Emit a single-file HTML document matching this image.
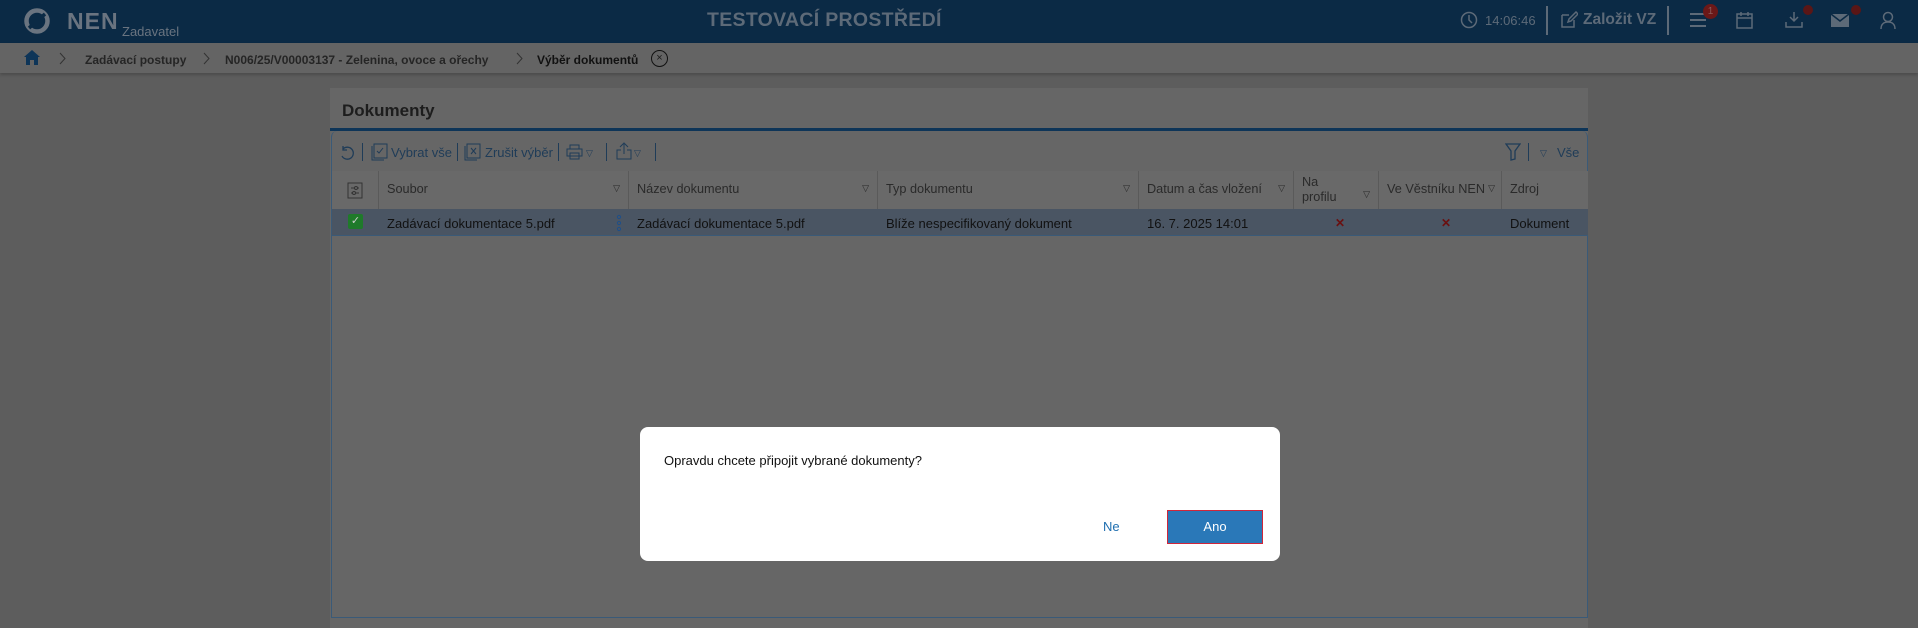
<!DOCTYPE html>
<html><head><meta charset="utf-8"><style>
*{box-sizing:border-box;margin:0;padding:0}
body{width:1918px;height:618px;overflow:hidden;background:#5d5d5d;font-family:"Liberation Sans",sans-serif;font-size:13px;color:#1c1c1c;position:relative}
.abs{position:absolute}
.hdr{left:0;top:0;width:1918px;height:43px;background:#0b2a45}
.bc{left:0;top:43px;width:1918px;height:30px;background:#646464;box-shadow:0 2px 3px rgba(0,0,0,.2)}
.panel{left:330px;top:88px;width:1258px;height:540px;background:#666}
.th{top:171px;height:38px;background:#696969;border-right:1px solid #5a5a5a;color:#2a2a2a;font-size:12.7px;padding:11px 8px}
.tri{position:absolute;right:8px;top:12px;font-size:9px;color:#2a2a2a}
.td{top:210px;height:25px;padding:6px 8px;font-size:13px;color:#111}
.bct{top:53px;font-size:12px;font-weight:bold;color:#252525}
.tb{top:145px;font-size:13px;color:#1f3c58}
.sep{top:143px;width:1px;height:18px;background:#1f3c58}
</style></head><body>
<div class="abs hdr"></div>
<svg class="abs" style="left:24px;top:8px" width="26" height="26" viewBox="0 0 26 26"><circle cx="13" cy="13" r="10.5" stroke="#6a7480" stroke-width="4.5" fill="none"/><path d="M5 20 L21 6" stroke="#0b2a45" stroke-width="3.5"/></svg>
<div class="abs" style="left:67px;top:8px;font-size:23px;font-weight:bold;color:#6a7480;letter-spacing:1px">NEN</div>
<div class="abs" style="left:122px;top:24px;font-size:13px;color:#6a7480">Zadavatel</div>
<div class="abs" style="left:707px;top:9px;font-size:19.5px;font-weight:bold;color:#5d6a78;letter-spacing:.3px">TESTOVACÍ PROSTŘEDÍ</div>
<svg class="abs" style="left:1460px;top:11px" width="18" height="18"><circle cx="9" cy="9" r="7.5" stroke="#5d6a78" stroke-width="1.5" fill="none"/><path d="M9 4v5l3 3" stroke="#5d6a78" stroke-width="1.5" fill="none"/></svg>
<div class="abs" style="left:1485px;top:13px;font-size:13px;color:#5d6a78">14:06:46</div>
<div class="abs" style="left:1546px;top:6px;width:2px;height:29px;background:#5d6a78"></div>
<svg class="abs" style="left:1560px;top:11px" width="18" height="18"><path d="M2 4h7M2 4v12h12V9M8 11l1-3 7-7 2 2-7 7z" stroke="#5d6a78" stroke-width="1.5" fill="none"/></svg>
<div class="abs" style="left:1583px;top:11px;font-size:15.5px;font-weight:bold;color:#5d6a78">Založit VZ</div>
<div class="abs" style="left:1667px;top:6px;width:2px;height:29px;background:#5d6a78"></div>
<svg class="abs" style="left:1689px;top:12px" width="18" height="16"><path d="M1 2h16M1 8h16M1 14h16" stroke="#5d6a78" stroke-width="2"/></svg>
<div class="abs" style="left:1703px;top:4px;width:15px;height:15px;border-radius:50%;background:#6b1818;color:#8a5a5a;font-size:10px;text-align:center;line-height:15px">1</div>
<svg class="abs" style="left:1736px;top:11px" width="17" height="18"><rect x="1" y="3" width="15" height="14" stroke="#5d6a78" stroke-width="1.5" fill="none"/><path d="M1 7h15M5 1v4M12 1v4" stroke="#5d6a78" stroke-width="1.5"/></svg>
<svg class="abs" style="left:1785px;top:11px" width="18" height="18"><path d="M9 1v9M5 6l4 4 4-4M1 11v5h16v-5" stroke="#5d6a78" stroke-width="1.5" fill="none"/></svg>
<div class="abs" style="left:1803px;top:5px;width:10px;height:10px;border-radius:50%;background:#5a1616"></div>
<svg class="abs" style="left:1831px;top:14px" width="18" height="13"><rect width="18" height="13" fill="#5d6a78"/><path d="M0 0l9 7 9-7" stroke="#0b2a45" stroke-width="1.5" fill="none"/></svg>
<div class="abs" style="left:1851px;top:5px;width:10px;height:10px;border-radius:50%;background:#5a1616"></div>
<svg class="abs" style="left:1880px;top:11px" width="16" height="18"><circle cx="8" cy="6" r="4.5" stroke="#5d6a78" stroke-width="1.5" fill="none"/><path d="M1 18c0-5 3-7 7-7s7 2 7 7" stroke="#5d6a78" stroke-width="1.5" fill="none"/></svg>

<div class="abs bc"></div>
<svg class="abs" style="left:23px;top:49px" width="18" height="17"><path d="M9 1L1 8h2v8h4v-5h4v5h4V8h2z" fill="#0e3558"/></svg>
<svg class="abs" style="left:59px;top:52px" width="8" height="13"><path d="M1 1l5 5.5L1 12" stroke="#333" fill="none"/></svg>
<div class="abs bct" style="left:85px">Zadávací postupy</div>
<svg class="abs" style="left:203px;top:52px" width="8" height="13"><path d="M1 1l5 5.5L1 12" stroke="#333" fill="none"/></svg>
<div class="abs bct" style="left:225px">N006/25/V00003137 - Zelenina, ovoce a ořechy</div>
<svg class="abs" style="left:516px;top:52px" width="8" height="13"><path d="M1 1l5 5.5L1 12" stroke="#333" fill="none"/></svg>
<div class="abs bct" style="left:537px;color:#111">Výběr dokumentů</div>
<div class="abs" style="left:651px;top:50px;width:17px;height:17px;border:1.5px solid #111;border-radius:50%;font-size:11px;text-align:center;line-height:14px">×</div>

<div class="abs panel"></div>
<div class="abs" style="left:342px;top:101px;font-size:17px;font-weight:bold;color:#1d1d1d">Dokumenty</div>
<div class="abs" style="left:330px;top:128px;width:1258px;height:3px;background:#0e3558"></div>
<div class="abs" style="left:331px;top:131px;width:1257px;height:487px;border:1px solid #3a5a78;border-top:none;border-radius:6px 6px 0 0"></div>
<svg class="abs" style="left:339px;top:145px" width="16" height="16"><path d="M4 4a6 6 0 1 1-1 7M4 1v4h4" stroke="#1f3c58" stroke-width="1.3" fill="none"/></svg>
<div class="abs sep" style="left:362px"></div>
<svg class="abs" style="left:371px;top:143px" width="17" height="18"><rect x="3" y="1" width="13" height="14" stroke="#1f3c58" fill="none"/><path d="M1 3v14h12M6 8l2 2 4-5" stroke="#1f3c58" fill="none"/></svg>
<div class="abs tb" style="left:391px">Vybrat vše</div>
<div class="abs sep" style="left:457px"></div>
<svg class="abs" style="left:464px;top:143px" width="17" height="18"><rect x="3" y="1" width="13" height="14" stroke="#1f3c58" fill="none"/><path d="M1 3v14h12M7 5l5 6M12 5l-5 6" stroke="#1f3c58" fill="none"/></svg>
<div class="abs tb" style="left:485px">Zrušit výběr</div>
<div class="abs sep" style="left:558px"></div>
<svg class="abs" style="left:566px;top:144px" width="17" height="16"><rect x="4" y="1" width="9" height="4" stroke="#1f3c58" fill="none"/><rect x="1" y="5" width="15" height="7" stroke="#1f3c58" fill="none"/><rect x="4" y="9" width="9" height="6" stroke="#1f3c58" fill="none"/></svg>
<div class="abs tb" style="left:586px;font-size:9px;top:148px">▽</div>
<div class="abs sep" style="left:606px"></div>
<svg class="abs" style="left:616px;top:142px" width="16" height="18"><path d="M8 12V2M4 5l4-4 4 4M5 8H1v9h14V8h-4" stroke="#1f3c58" fill="none"/></svg>
<div class="abs tb" style="left:634px;font-size:9px;top:148px">▽</div>
<div class="abs sep" style="left:655px"></div>
<svg class="abs" style="left:1505px;top:143px" width="16" height="18"><path d="M1 1h14l-5 7v8l-4 1V8z" stroke="#1f3c58" stroke-width="1.3" fill="none"/></svg>
<div class="abs sep" style="left:1528px"></div>
<div class="abs tb" style="left:1540px;font-size:9px;top:148px">▽</div>
<div class="abs tb" style="left:1557px">Vše</div>

<div class="abs th" style="left:332px;width:47px"><svg width="16" height="17" style="display:block;margin:0 auto"><rect x="1" y="1" width="14" height="15" stroke="#333" fill="none"/><path d="M4 6h8M4 11h8" stroke="#333"/><circle cx="9" cy="6" r="1.5" fill="#696969" stroke="#333"/><circle cx="7" cy="11" r="1.5" fill="#696969" stroke="#333"/></svg></div>
<div class="abs th" style="left:379px;width:250px">Soubor<span class="tri">▽</span></div>
<div class="abs th" style="left:629px;width:249px">Název dokumentu<span class="tri">▽</span></div>
<div class="abs th" style="left:878px;width:261px">Typ dokumentu<span class="tri">▽</span></div>
<div class="abs th" style="left:1139px;width:155px">Datum a čas vložení<span class="tri">▽</span></div>
<div class="abs th" style="left:1294px;width:85px;padding-top:4px;line-height:15px">Na<br>profilu<span class="tri" style="top:16px">▽</span></div>
<div class="abs th" style="left:1379px;width:123px">Ve Věstníku NEN<span class="tri" style="right:6px">▽</span></div>
<div class="abs th" style="left:1502px;width:86px;border-right:none">Zdroj</div>

<div class="abs" style="left:332px;top:209px;width:1256px;height:27px;background:#4a5563;border-bottom:1px solid #3a5a78"></div>
<div class="abs" style="left:348px;top:214px;width:15px;height:15px;background:#1f7a2a;border-radius:2px;color:#ccc;font-size:11px;text-align:center;line-height:15px">✓</div>
<div class="abs td" style="left:379px">Zadávací dokumentace 5.pdf</div>
<svg class="abs" style="left:616px;top:214px" width="6" height="18"><circle cx="3" cy="3" r="1.6" stroke="#1f4f88" fill="none"/><circle cx="3" cy="9" r="1.6" stroke="#1f4f88" fill="none"/><circle cx="3" cy="15" r="1.6" stroke="#1f4f88" fill="none"/></svg>
<div class="abs td" style="left:629px">Zadávací dokumentace 5.pdf</div>
<div class="abs td" style="left:878px">Blíže nespecifikovaný dokument</div>
<div class="abs td" style="left:1139px">16. 7. 2025 14:01</div>
<div class="abs td" style="left:1327px;color:#6a1010;font-weight:bold;font-size:12px">✕</div>
<div class="abs td" style="left:1433px;color:#6a1010;font-weight:bold;font-size:12px">✕</div>
<div class="abs td" style="left:1502px">Dokument</div>

<div class="abs" style="left:640px;top:427px;width:640px;height:134px;background:#fff;border-radius:8px"></div>
<div class="abs" style="left:664px;top:453px;font-size:13px;color:#111">Opravdu chcete připojit vybrané dokumenty?</div>
<div class="abs" style="left:1103px;top:519px;font-size:13px;color:#1f6fb0">Ne</div>
<div class="abs" style="left:1167px;top:510px;width:96px;height:34px;background:#2a78b8;border:1px solid #d0263a;color:#fff;font-size:13px;text-align:center;line-height:32px">Ano</div>
</body></html>
